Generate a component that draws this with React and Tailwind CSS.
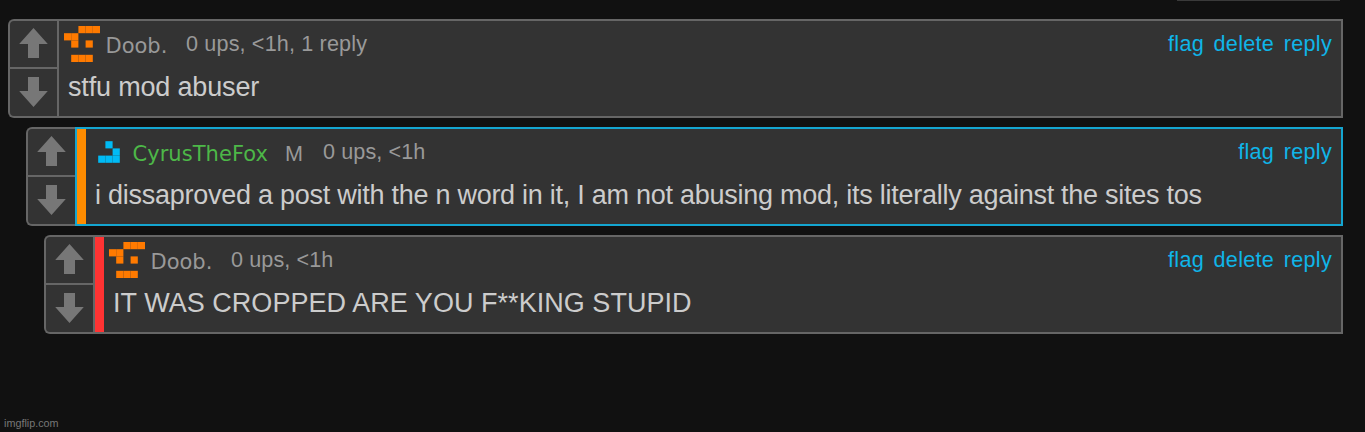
import clsx from 'clsx';

// cells of the 5x5 user icons, as [column, row]
const ICONS = {
  doob: { color: '#ff7a00', cells: [[2, 0], [3, 0], [4, 0], [0, 1], [1, 1], [1, 2], [3, 2], [1, 4], [2, 4], [3, 4]] },
  cyrus: { color: '#00bbf5', cells: [[2, 1], [3, 2], [1, 3], [2, 3], [3, 3]] },
};

const COMMENTS = [
  {
    user: 'Doob.',
    icon: 'doob',
    stats: '0 ups, <1h, 1 reply',
    text: 'stfu mod abuser',
    links: ['flag', 'delete', 'reply'],
    indent: 'ml-2',
    nameClass: 'w-[80.5px] text-[#999]',
    statsClass: 'tracking-[0.15px]',
    textClass: 'tracking-[-0.17px]',
  },
  {
    user: 'CyrusTheFox',
    icon: 'cyrus',
    mod: true,
    stats: '0 ups, <1h',
    text: 'i dissaproved a post with the n word in it, I am not abusing mod, its literally against the sites tos',
    links: ['flag', 'reply'],
    indent: 'ml-[26px]',
    bar: 'bg-[#ff8c00]',
    active: true,
    nameClass: 'w-[152.5px] text-[#4db848] tracking-[0.05px]',
    statsClass: 'tracking-[0.1px]',
    textClass: 'tracking-[-0.26px]',
  },
  {
    user: 'Doob.',
    icon: 'doob',
    stats: '0 ups, <1h',
    text: 'IT WAS CROPPED ARE YOU F**KING STUPID',
    links: ['flag', 'delete', 'reply'],
    indent: 'ml-[44px]',
    bar: 'bg-[#ff3333]',
    nameClass: 'w-[80.5px] text-[#999]',
    statsClass: 'tracking-[0.1px]',
    textClass: 'tracking-[0.04px]',
  },
];

const UserIcon = ({ name }) => {
  const { color, cells } = ICONS[name];
  return (
    <svg className="w-9 h-9 shrink-0" viewBox="0 0 36 36" fill={color}>
      {cells.map(([x, y]) => (
        <rect key={`${x}-${y}`} x={x * 7.2} y={y * 7.2} width="7.2" height="7.2" />
      ))}
    </svg>
  );
};

const Arrow = ({ down }) => (
  <svg className={clsx('w-[29px] h-[30px]', down && 'rotate-180')} viewBox="0 0 29 30" fill="#777">
    <path d="M14.5 0 28.8 16H20V30H9V16H0.2Z" />
  </svg>
);

const Votes = () => (
  <div className="w-[49px] shrink-0 flex flex-col border-2 border-r-0 border-[#666] rounded-l-md bg-[#333]">
    <button className="h-[48px] pl-[9px] pt-[7px] flex items-start border-b-2 border-[#666]"><Arrow /></button>
    <button className="h-[47px] pl-[9px] pt-[8px] flex items-start"><Arrow down /></button>
  </div>
);

const Comment = ({ comment }) => (
  <div className={clsx('flex h-[99px] mr-[22px]', comment.indent)}>
    <Votes />
    <div className={clsx('flex-1 min-w-0 flex border-2 bg-[#333]', comment.active ? 'border-[#14a5d0]' : 'border-[#666]')}>
      {comment.bar && <div className={clsx('w-[9px] shrink-0', comment.bar)} />}
      <div className="flex-1 min-w-0 pt-[5px]">
        <div className="flex h-9 pl-[5px] pr-[9px]">
          <UserIcon name={comment.icon} />
          <a className={clsx('ml-[5.5px] mt-[5px] shrink-0 text-[21px] leading-[30px] font-["DejaVu_Sans",sans-serif]', comment.nameClass)}>{comment.user}</a>
          {comment.mod && <span className="w-[38px] mt-[5px] shrink-0 text-[21.6px] leading-[30px] text-[#999]">M</span>}
          <span className={clsx('text-[21.6px] leading-[36px] text-[#999] whitespace-nowrap', comment.statsClass)}>{comment.stats}</span>
          <div className="ml-auto flex gap-[9.5px] text-[21.6px] leading-[36px] text-[#0fb5e8] tracking-[0.3px]">
            {comment.links.map(link => <a key={link}>{link}</a>)}
          </div>
        </div>
        <p className={clsx('pl-[9px] mt-[9px] text-[27px] leading-[32px] text-[#ccc] whitespace-nowrap', comment.textClass)}>{comment.text}</p>
      </div>
    </div>
  </div>
);

function App() {
  return (
    <div className="h-[432px] overflow-hidden flex flex-col bg-[#111] font-['Liberation_Sans',sans-serif]">
      <div className="h-px w-[163px] self-end mr-[25px] shrink-0 bg-[#3a3a3a]" />
      <div className="mt-[18px] flex flex-col gap-[9px]">
        {COMMENTS.map((comment, i) => <Comment key={i} comment={comment} />)}
      </div>
      <footer className="mt-auto mb-px pl-1 text-[10.8px] leading-[16px] text-[#777]">imgflip.com</footer>
    </div>
  );
}

export default App;
